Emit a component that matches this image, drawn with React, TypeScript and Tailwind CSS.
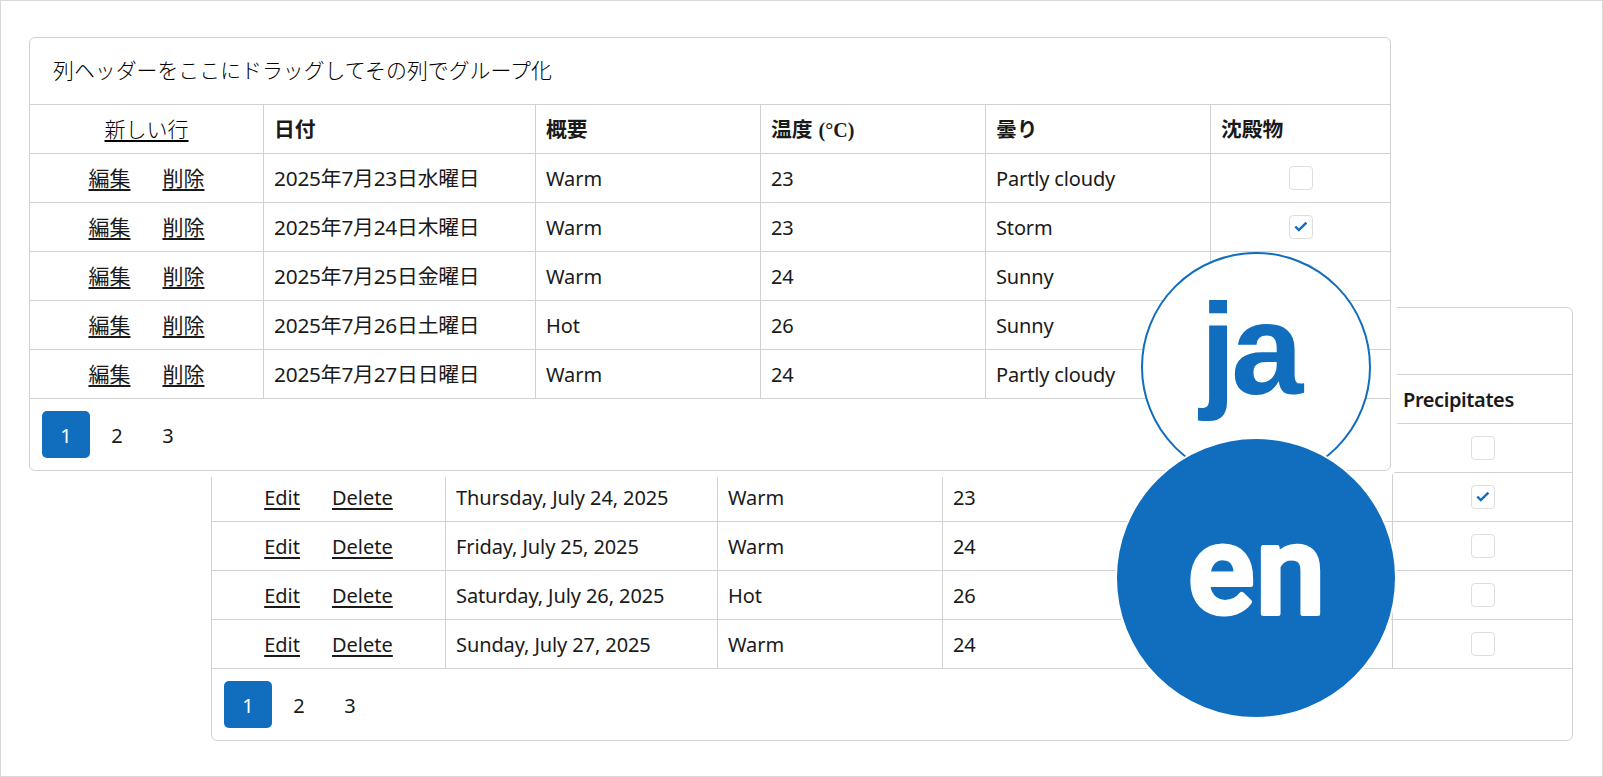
const rows = {
  ja: [
    ["2025年7月23日水曜日", "Warm", "23", "Partly cloudy", false],
    ["2025年7月24日木曜日", "Warm", "23", "Storm", true],
    ["2025年7月25日金曜日", "Warm", "24", "Sunny", false],
    ["2025年7月26日土曜日", "Hot", "26", "Sunny", false],
    ["2025年7月27日日曜日", "Warm", "24", "Partly cloudy", false],
  ],
  en: [
    ["Wednesday, July 23, 2025", "Warm", "23", "Partly cloudy", false],
    ["Thursday, July 24, 2025", "Warm", "23", "Storm", true],
    ["Friday, July 25, 2025", "Warm", "24", "Sunny", false],
    ["Saturday, July 26, 2025", "Hot", "26", "Sunny", false],
    ["Sunday, July 27, 2025", "Warm", "24", "Partly cloudy", false],
  ],
} as const

const labels = {
  ja: {
    group: "列ヘッダーをここにドラッグしてその列でグループ化",
    add: "新しい行",
    edit: "編集",
    remove: "削除",
    heads: ["日付", "概要", "温度", "曇り", "沈殿物"],
  },
  en: {
    group: "Drag a column header here to group by that column",
    add: "New row",
    edit: "Edit",
    remove: "Delete",
    heads: ["Date", "Summary", "Temp.", "Clouds", "Precipitates"],
  },
}

const rowClass = "grid grid-cols-[234px_272px_225px_225px_225px_1fr] h-[49px] border-b border-[#d2d2d2]"
const cellClass = "flex items-center px-[10px] pt-[2px] border-r border-[#d2d2d2] last:border-r-0"
const linkClass = "underline decoration-2 underline-offset-[3px]"

function Checkbox({ checked }: { checked: boolean }) {
  return (
    <span className="-mt-[2px] flex h-[24px] w-[24px] items-center justify-center rounded-[4px] border border-[#dedede] bg-white">
      {checked && (
        <svg width="24" height="24" viewBox="0 0 24 24" fill="none" className="shrink-0">
          <path d="M6.3 11.5 L9.8 15 L17.4 7.6" stroke="#116dbd" strokeWidth="2.4" />
        </svg>
      )}
    </span>
  )
}

function DataGrid({ lang, className }: { lang: "ja" | "en"; className: string }) {
  const t = labels[lang]
  const jaGroup = lang === "ja" ? "text-[20.9px]" : ""
  const jaLink = lang === "ja" ? "text-[21px]" : ""
  const dateText = lang === "ja" ? "text-[20.8px] tracking-[-0.2px]" : "tracking-[-0.1px]"
  return (
    <div className={`absolute h-[434px] w-[1362px] rounded-[6px] border border-[#d2d2d2] bg-white ${className}`}>
      <div className={`flex h-[67px] items-center border-b border-[#d2d2d2] pl-[23px] font-light text-black ${jaGroup}`}>{t.group}</div>
      <div className={rowClass}>
        <div className={`${cellClass} justify-center`}>
          <a className={`font-light text-black ${linkClass} ${jaLink}`}>{t.add}</a>
        </div>
        {t.heads.map((head, i) => (
          <div key={head} className={`${cellClass} ${lang === "ja" ? "font-bold text-[20.8px]" : "font-semibold tracking-[-0.4px]"}`}>
            {head}
            {i === 2 && <span className="ml-[6px] font-['Liberation_Serif'] font-bold text-[20px]">{lang === "ja" ? "(°C)" : "(C)"}</span>}
          </div>
        ))}
      </div>
      {rows[lang].map((row) => (
        <div key={row[0]} className={rowClass}>
          <div className={`${cellClass} justify-center gap-[32px]`}>
            <a className={`${linkClass} ${jaLink}`}>{t.edit}</a>
            <a className={`${linkClass} ${jaLink}`}>{t.remove}</a>
          </div>
          <div className={`${cellClass} ${dateText}`}>{row[0]}</div>
          <div className={`${cellClass} tracking-[-0.1px]`}>{row[1]}</div>
          <div className={`${cellClass} tracking-[-0.1px]`}>{row[2]}</div>
          <div className={`${cellClass} tracking-[-0.15px]`}>{row[3]}</div>
          <div className={`${cellClass} justify-center`}>
            <Checkbox checked={row[4]} />
          </div>
        </div>
      ))}
      <div className="flex gap-[3px] pl-[12px] pt-[12px]">
        <button className="flex h-[47px] w-[48px] items-center justify-center rounded-[5px] bg-[#116dbd] pt-[2px] text-white">1</button>
        <button className="flex h-[47px] w-[48px] items-center justify-center pt-[2px]">2</button>
        <button className="flex h-[47px] w-[48px] items-center justify-center pt-[2px]">3</button>
      </div>
    </div>
  )
}

function LanguageBadges() {
  return (
    <svg className="absolute left-[1114px] top-[249px] z-20" width="284" height="472" viewBox="1115 250 284 472">
      <circle cx="1256" cy="367" r="114" fill="#fff" stroke="#116dbd" strokeWidth="2" />
      <text x="1200" y="393.5" fill="#116dbd" fontFamily="Liberation Sans" fontWeight="700" fontSize="130" letterSpacing="-5">
        ja
      </text>
      <circle cx="1256" cy="578" r="140" fill="#116dbd" stroke="#fff" strokeWidth="2" />
      <text
        x="1188"
        y="612.5"
        fill="#fff"
        stroke="#fff"
        strokeWidth="5"
        strokeLinejoin="round"
        fontFamily="Roboto"
        fontWeight="500"
        fontSize="124"
        letterSpacing="1.5"
      >
        en
      </text>
    </svg>
  )
}

export default function App() {
  return (
    <div className="relative h-[777px] w-[1603px] overflow-hidden border border-[#d9d9d9] bg-white font-['Noto_Sans','Noto_Sans_CJK_JP',sans-serif] text-[20px] text-[#1a1a1a]">
      <DataGrid lang="en" className="left-[210px] top-[306px]" />
      <DataGrid lang="ja" className="left-[28px] top-[36px] z-10 shadow-[0_0_0_6px_#fff]" />
      <LanguageBadges />
    </div>
  )
}
